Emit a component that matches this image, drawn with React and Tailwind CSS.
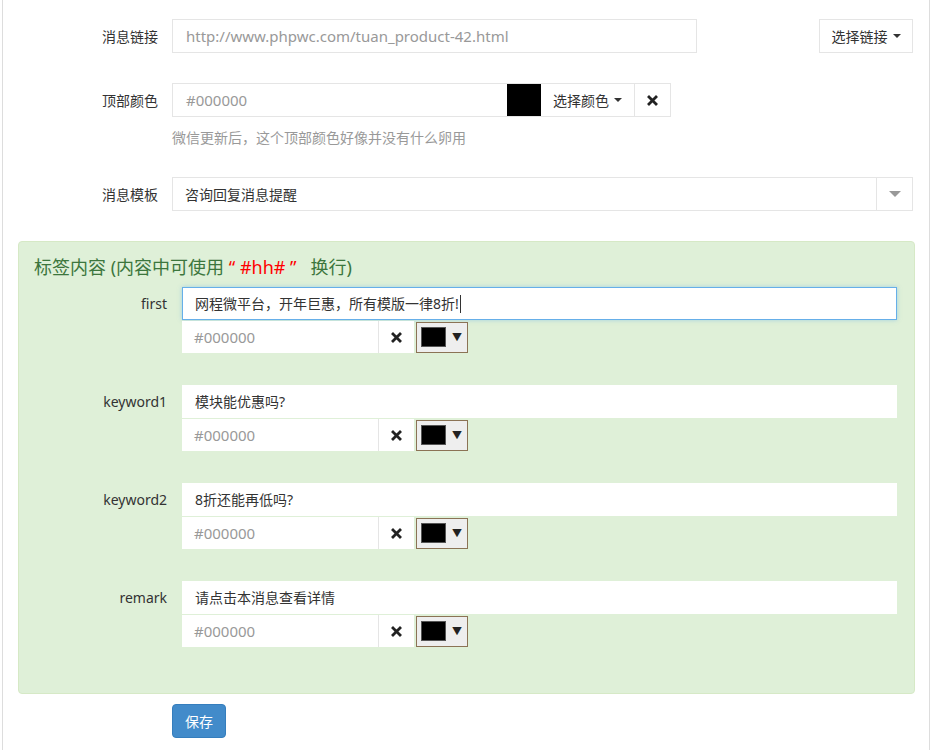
import React from "react";

const font = "font-['Noto_Sans','Noto_Sans_CJK_SC',sans-serif]";

const Times = () => (
  <svg width="11" height="11" viewBox="0 0 11 11" className="text-[#222]">
    <path d="M2 2 L9 9 M9 2 L2 9" stroke="currentColor" strokeWidth="2.8" strokeLinecap="square" />
  </svg>
);

const Caret = ({ color = "#333" }) => (
  <span
    className="inline-block w-0 h-0 border-x-[4px] border-x-transparent border-t-[4px] ml-[5px] align-middle"
    style={{ borderTopColor: color }}
  />
);

const ColorRow = () => (
  <div className="flex items-center h-[32px]">
    <div className="w-[196px] h-full bg-white flex items-center pl-[12px] text-[15px] text-[#999]">#000000</div>
    <div className="w-[36px] h-full bg-white border-l border-[#e5e5e5] flex items-center justify-center">
      <Times />
    </div>
    <div className="ml-[2px] w-[52px] h-[31px] bg-[#eeeeee] border border-[#8b7355] flex items-center pl-[4px] gap-[6px]">
      <div className="w-[25px] h-[20px] bg-black border border-[#555]" />
      <span className="text-[10px] leading-none text-[#222]">▼</span>
    </div>
  </div>
);

const TagRow = ({ label, value, focused }) => (
  <div className="flex">
    <div className="w-[163px] text-right pr-[15px] h-[33px] flex items-center justify-end text-[#333]">{label}</div>
    <div className="flex flex-col w-[715px]">
      <div
        className={
          "h-[33px] bg-white flex items-center pl-[12px] text-[#333] border " +
          (focused ? "border-[#66afe9] shadow-[0_0_4px_rgba(102,175,233,0.5)]" : "border-white")
        }
      >
        {value}
        {focused && <span className="inline-block w-px h-[18px] bg-[#333] ml-px" />}
      </div>
      <div className="h-px" />
      <ColorRow />
    </div>
  </div>
);

export default function App() {
  return (
    <div className={`${font} text-[14px] bg-white w-[936px] h-[750px] overflow-hidden`}>
      <div className="ml-[2px] w-[928px] h-[750px] border-x border-[#dddddd]">
        {/* 消息链接 */}
        <div className="flex items-center pt-[19px]">
          <div className="w-[155px] text-right text-[#333]">消息链接</div>
          <div className="ml-[14px] w-[525px] h-[34px] border border-[#e5e5e5] flex items-center pl-[13px] text-[#999] text-[15px]">
            http://www.phpwc.com/tuan_product-42.html
          </div>
          <div className="ml-auto mr-[16px] w-[94px] h-[34px] border border-[#e5e5e5] flex items-center justify-center text-[#333]">
            选择链接
            <Caret />
          </div>
        </div>

        {/* 顶部颜色 */}
        <div className="flex items-center mt-[30px]">
          <div className="w-[155px] text-right text-[#333]">顶部颜色</div>
          <div className="ml-[14px] flex h-[34px] border border-[#e5e5e5]">
            <div className="w-[334px] flex items-center pl-[13px] text-[#999] text-[15px]">#000000</div>
            <div className="w-[34px] h-full bg-black" />
            <div className="w-[94px] flex items-center justify-center text-[#333] border-r border-[#e5e5e5]">
              选择颜色
              <Caret />
            </div>
            <div className="w-[35px] flex items-center justify-center">
              <Times />
            </div>
          </div>
        </div>
        <div className="ml-[169px] mt-[10px] text-[14px] text-[#999]">微信更新后，这个顶部颜色好像并没有什么卵用</div>

        {/* 消息模板 */}
        <div className="flex items-center mt-[29px]">
          <div className="w-[155px] text-right text-[#333]">消息模板</div>
          <div className="ml-[14px] w-[741px] h-[34px] border border-[#e5e5e5] flex items-center">
            <div className="flex-1 pl-[12px] text-[#333]">咨询回复消息提醒</div>
            <div className="w-[36px] h-full border-l border-[#e5e5e5] flex items-center justify-center">
              <span className="inline-block w-0 h-0 border-x-[6px] border-x-transparent border-t-[6px] border-t-[#999]" />
            </div>
          </div>
        </div>

        {/* 标签内容 */}
        <div className="ml-[15px] mt-[30px] w-[897px] h-[453px] bg-[#dff0d8] border border-[#d6e9c6] rounded-[4px]">
          <div className="pl-[15px] pt-[13px] text-[18px] font-normal text-[#3c763d] leading-[24px]">
            标签内容 (内容中可使用 <span className="text-[#ff0000]">“ #hh# ”</span>&nbsp;&nbsp; 换行)
          </div>
          <div className="mt-[8px] flex flex-col gap-[32px]">
            <TagRow label="first" value="网程微平台，开年巨惠，所有模版一律8折!" focused />
            <TagRow label="keyword1" value="模块能优惠吗?" />
            <TagRow label="keyword2" value="8折还能再低吗?" />
            <TagRow label="remark" value="请点击本消息查看详情" />
          </div>
        </div>

        <div className="ml-[169px] mt-[10px]">
          <button className="w-[54px] h-[34px] bg-[#428bca] border border-[#357ebd] rounded-[4px] text-white text-[14px]">
            保存
          </button>
        </div>
      </div>
    </div>
  );
}
